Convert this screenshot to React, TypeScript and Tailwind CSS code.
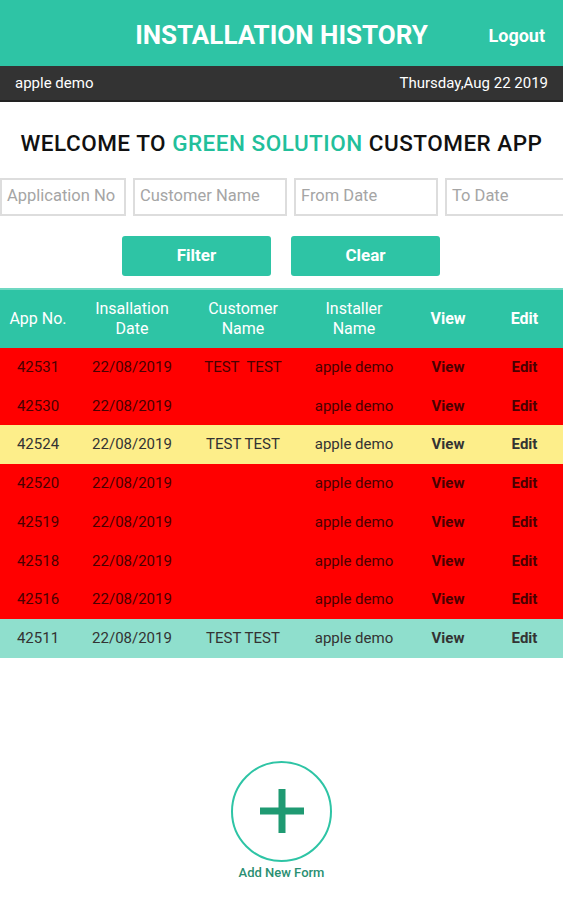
import React from "react";

type Row = {
  no: string;
  date: string;
  customer: string;
  installer: string;
  tone: "red" | "yellow" | "teal";
};

const rows: Row[] = [
  { no: "42531", date: "22/08/2019", customer: "TEST  TEST", installer: "apple demo", tone: "red" },
  { no: "42530", date: "22/08/2019", customer: "", installer: "apple demo", tone: "red" },
  { no: "42524", date: "22/08/2019", customer: "TEST TEST", installer: "apple demo", tone: "yellow" },
  { no: "42520", date: "22/08/2019", customer: "", installer: "apple demo", tone: "red" },
  { no: "42519", date: "22/08/2019", customer: "", installer: "apple demo", tone: "red" },
  { no: "42518", date: "22/08/2019", customer: "", installer: "apple demo", tone: "red" },
  { no: "42516", date: "22/08/2019", customer: "", installer: "apple demo", tone: "red" },
  { no: "42511", date: "22/08/2019", customer: "TEST TEST", installer: "apple demo", tone: "teal" },
];

// row background + text colour by status
const toneClass: Record<Row["tone"], string> = {
  red: "bg-[#ff0000] text-[#4a0000]",
  yellow: "bg-[#fdee8a] text-[#333333]",
  teal: "bg-[#8fdfcd] text-[#333333]",
};

const cols = "grid grid-cols-[76px_112px_110px_112px_76px_77px]";

export default function App() {
  return (
    <div className="w-[563px] h-[900px] bg-white font-['Roboto',sans-serif] flex flex-col">
      {/* header */}
      <div className="h-[66px] bg-[#2ec4a5] flex items-center relative">
        <h1 className="w-full text-center text-white text-[26px] font-bold pt-[4px]">
          INSTALLATION HISTORY
        </h1>
        <span className="absolute right-[18px] top-[22px] text-white text-[18px] font-bold">Logout</span>
      </div>
      <div className="h-[36px] bg-[#333333] flex items-center justify-between px-[15px] text-white text-[15px] border-b-2 border-[#222]">
        <span>apple demo</span>
        <span>Thursday,Aug 22 2019</span>
      </div>

      {/* welcome */}
      <div className="mt-[25px] text-center text-[22.5px] tracking-[0.5px] font-medium text-[#111]">
        WELCOME TO <span className="text-[#22bf9b]">GREEN SOLUTION</span> CUSTOMER APP
      </div>

      {/* filters */}
      <div className="mt-[17px] flex gap-[7px] h-[38px] overflow-hidden">
        {[
          ["Application No", "w-[126px]"],
          ["Customer Name", "w-[154px]"],
          ["From Date", "w-[144px]"],
          ["To Date", "w-[125px]"],
        ].map(([ph, w]) => (
          <div
            key={ph}
            className={`${w} shrink-0 border-2 border-[#dddddd] flex items-center px-[5px] whitespace-nowrap text-[16.5px] text-[#a5a5a5]`}
          >
            {ph}
          </div>
        ))}
      </div>
      <div className="mt-[20px] flex justify-center gap-[20px] pr-[1px]">
        <button className="w-[149px] h-[40px] rounded-[3px] bg-[#2ec4a5] text-white text-[17px] font-bold">
          Filter
        </button>
        <button className="w-[149px] h-[40px] rounded-[3px] bg-[#2ec4a5] text-white text-[17px] font-bold">
          Clear
        </button>
      </div>

      {/* table */}
      <div className="mt-[12px]">
        <div className={`${cols} h-[60px] bg-[#2ec4a5] border-t-2 border-[#6fd8c2] text-white text-[16px] leading-[20px]`}>
          <div className="flex items-center justify-center text-center">App No.</div>
          <div className="flex items-center justify-center text-center">Insallation<br />Date</div>
          <div className="flex items-center justify-center text-center">Customer<br />Name</div>
          <div className="flex items-center justify-center text-center">Installer<br />Name</div>
          <div className="flex items-center justify-center font-bold">View</div>
          <div className="flex items-center justify-center font-bold">Edit</div>
        </div>
        {rows.map((r) => (
          <div key={r.no} className={`${cols} h-[38.75px] text-[15px] ${toneClass[r.tone]}`}>
            <div className="flex items-center justify-center">{r.no}</div>
            <div className="flex items-center justify-center">{r.date}</div>
            <div className="flex items-center justify-center whitespace-pre">{r.customer}</div>
            <div className="flex items-center justify-center">{r.installer}</div>
            <div className="flex items-center justify-center font-bold">View</div>
            <div className="flex items-center justify-center font-bold">Edit</div>
          </div>
        ))}
      </div>

      {/* add new */}
      <div className="mt-[103px] flex flex-col items-center">
        <div className="w-[101px] h-[101px] rounded-full border-2 border-[#2ec4a5] flex items-center justify-center">
          <svg width="44" height="44" viewBox="0 0 44 44">
            <rect x="18.5" y="0" width="7" height="44" fill="#1f9a72" />
            <rect x="0" y="18.5" width="44" height="7" fill="#1f9a72" />
          </svg>
        </div>
        <span className="mt-[1px] text-[13px] font-medium text-[#2a8f72]">Add New Form</span>
      </div>
    </div>
  );
}
